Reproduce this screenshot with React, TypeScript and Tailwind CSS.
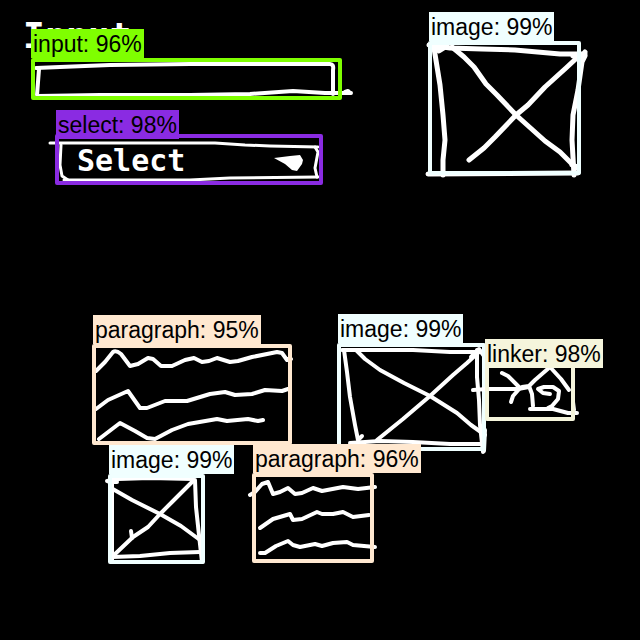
import React from "react";

type SketchProps = {
  viewBox: string;
  lines: string[];
  title?: string;
  weight?: number;
  children?: React.ReactNode;
};

/* Hand-drawn strokes in canvas coordinates; they may overshoot the box they belong to. */
function Sketch({ viewBox, lines, title, weight = 4, children }: SketchProps) {
  return (
    <svg
      viewBox={viewBox}
      className="pointer-events-none absolute inset-0 size-full overflow-visible"
      fill="none"
      stroke="white"
      strokeWidth={weight}
      strokeLinecap="round"
      strokeLinejoin="round"
      role={title ? "img" : undefined}
      aria-label={title}
      aria-hidden={title ? undefined : true}
    >
      {lines.map((d) => (
        <path key={d} d={d} />
      ))}
      {children}
    </svg>
  );
}

const tag = "absolute bottom-full whitespace-nowrap px-0.5 pt-px text-[23px]/[28px] text-black";

type BoxProps = { place: string; score: string; viewBox: string; lines: string[]; weight?: number };

function ImageBox({ place, score, viewBox, lines, weight }: BoxProps) {
  return (
    <figure className={`absolute ${place}`}>
      <Sketch viewBox={viewBox} lines={lines} weight={weight} title="sketched image" />
      <div className="absolute inset-0 rounded-xs border-4 border-[#f0ffff]" />
      <figcaption className={`${tag} left-px bg-[#f0ffff]`}>image: {score}</figcaption>
    </figure>
  );
}

function ParagraphBox({ place, score, viewBox, lines, weight }: BoxProps) {
  return (
    <figure className={`absolute ${place}`}>
      <Sketch viewBox={viewBox} lines={lines} weight={weight} title="sketched paragraph" />
      <div className="absolute inset-0 rounded-xs border-4 border-[#ffe8d0]" />
      <figcaption className={`${tag} left-px bg-[#ffe8d0]`}>paragraph: {score}</figcaption>
    </figure>
  );
}

export default function App() {
  return (
    <main className="relative min-h-screen overflow-hidden bg-black font-['Liberation_Sans',Arial,sans-serif]">
      <section className="absolute top-[58px] left-[31px] h-[42px] w-[311px]">
        <span className="absolute -top-12 -left-2 font-['DejaVu_Sans_Mono',monospace] text-[36px]/[52px] font-bold text-white">
          Input
        </span>
        <Sketch
          viewBox="31 58 311 42"
          lines={[
            "M36 68L60 67L110 65L190 64L330 64Q334 64 333 70L333 94",
            "M39 69L37 95",
            "M38 96L100 95L190 95L250 94L293 91L325 93L351 93",
            "M345 92L348 91L350 93",
          ]}
        />
        <input
          id="sketch-input"
          className="absolute inset-0 size-full rounded-xs border-4 border-[#7fff00] bg-transparent px-3 text-white outline-none"
        />
        <label htmlFor="sketch-input" className={`${tag} left-0 bg-[#7fff00]`}>
          input: 96%
        </label>
      </section>

      <section className="absolute top-[134px] left-[55px] h-[51px] w-[268px]">
        <Sketch
          viewBox="55 134 268 51"
          lines={[
            "M50 143L215 143L245 145L270 146L318 147",
            "M61 145L60 165L62 176L68 180",
            "M64 180L165 180L190 180L230 178L318 177",
            "M315 147L318 152L315 168L317 177",
          ]}
          weight={3}
        >
          <path d="M274 158L290 156L300 155L303 160L302 164L297 171L292 170L285 164Z" fill="white" stroke="none" />
        </Sketch>
        <select
          id="sketch-select"
          className="absolute inset-0 size-full appearance-none rounded-xs border-4 border-[#8a2be2] bg-transparent pb-2 pl-[18px] font-['DejaVu_Sans_Mono',monospace] text-[30px] font-bold text-white outline-none"
        >
          <option>Select</option>
        </select>
        <label htmlFor="sketch-select" className={`${tag} left-px -mb-[5px] bg-[#8a2be2]`}>
          select: 98%
        </label>
      </section>

      <ImageBox
        place="top-[41px] left-[428px] h-[134px] w-[153px]"
        score="99%"
        viewBox="428 41 153 134"
        weight={5}
        lines={[
          "M429 45L450 48L482 49L515 50L560 54L585 54",
          "M434 48L440 85L443 115L445 140L443 160L443 175",
          "M585 56L582 62L578 90L573 115L572 140L574 175",
          "M452 47L464 57L474 67L486 84L497 95L516 115L545 141L560 152L576 168",
          "M580 55L566 68L545 87L528 105L516 115L495 137L484 148L469 160",
          "M434 47L439 51L447 46M573 56L580 59L585 52",
          "M428 174L578 173M572 165L578 167",
        ]}
      />

      <ParagraphBox
        place="top-[344px] left-[92px] h-[101px] w-[200px]"
        score="95%"
        viewBox="92 344 200 101"
        lines={[
          "M96 371L105 362L113 352Q116 350 121 354L130 366L138 364L148 358L153 359L161 366L172 366L185 360L194 358L202 362L209 361L217 358L230 362L238 361L252 357L277 352L282 353L287 360L291 359",
          "M96 409L108 400L128 391L140 408L147 408L165 401L187 401L210 394L225 392L235 395L252 394L265 390L282 391L288 389",
          "M99 439L120 423L135 431L147 438L155 439L172 430L188 424L217 419L227 421L248 419L258 421L263 420",
        ]}
      />

      <ImageBox
        place="top-[343px] left-[337px] h-[108px] w-[149px]"
        score="99%"
        viewBox="337 343 149 108"
        lines={[
          "M342 350L378 350L413 350L450 352L477 352",
          "M344 350L347 372L350 397L355 425L358 440L362 436",
          "M350 443L380 441L413 442L450 444L483 444",
          "M477 350L477 377L479 400L480 425L483 452",
          "M356 350L365 359L380 370L404 383L430 396L457 413L471 425L485 435",
          "M480 351L467 363L453 375L430 396L403 419L377 440",
          "M471 357L479 349L484 356M485 430L484 451",
        ]}
      />

      <a href="#link" className="absolute top-[364px] left-[485px] h-[57px] w-[90px]">
        <Sketch
          viewBox="485 364 90 57"
          lines={[
            "M473 390L487 389L518 389L529 387",
            "M502 373L508 376L519 387",
            "M520 388L513 396L511 402",
            "M522 387L529 386L535 380L550 367L561 379L569 390",
            "M529 386L532 394L533 406",
            "M550 394L543 393L538 389L544 387L553 387L559 391L558 399L552 406L548 408",
            "M530 409L553 409L568 413L577 413M573 402L574 410",
          ]}
        />
        <span className="absolute inset-0 rounded-xs border-4 border-[#f5f5dc]" />
        <span className={`${tag} left-0 -mb-1 bg-[#f5f5dc]`}>linker: 98%</span>
      </a>

      <ImageBox
        place="top-[474px] left-[108px] h-[90px] w-[97px]"
        score="99%"
        viewBox="108 474 97 90"
        lines={[
          "M107 481L118 479L150 478L193 479",
          "M112 480L112 510L112 540L112 560",
          "M195 480L196 507L199 535L202 562",
          "M112 557L140 556L170 553L200 552",
          "M111 488L132 500L160 514L181 526L200 540",
          "M193 481L172 502L160 514L148 527L133 537L114 555",
          "M131 531L132 538",
          "M109 482L117 482",
        ]}
      />

      <ParagraphBox
        place="top-[473px] left-[252px] h-[90px] w-[122px]"
        score="96%"
        viewBox="252 473 122 90"
        lines={[
          "M250 495L255 492L262 484L268 482L273 494L280 492L288 488L295 494L302 493L313 488L322 491L343 487L358 489L375 487",
          "M260 528L273 519L290 514L293 520L302 519L317 512L322 514L333 514L343 512L353 517L369 515",
          "M260 553L265 553L276 546L288 541L293 545L300 547L315 544L322 546L333 543L347 542L353 545L375 547",
        ]}
      />
    </main>
  );
}
